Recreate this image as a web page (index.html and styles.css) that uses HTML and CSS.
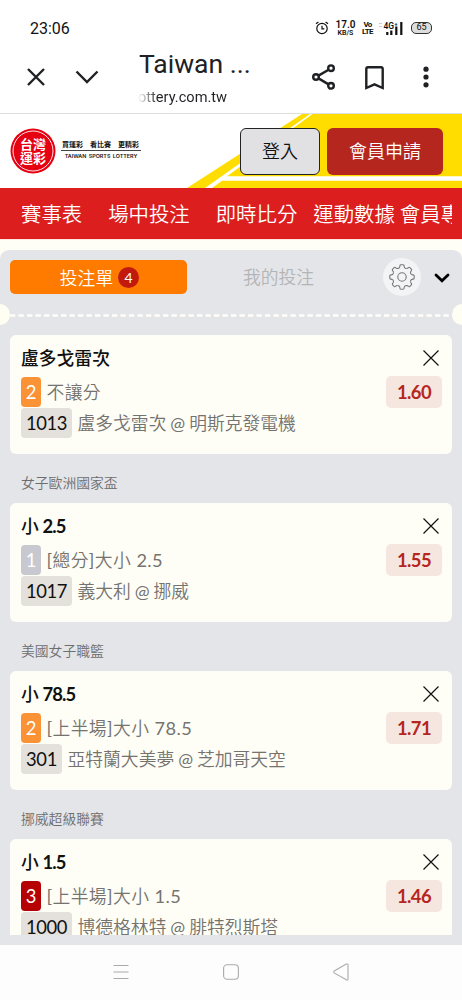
FILE: index.html
```html
<!DOCTYPE html>
<html lang="zh-Hant">
<head>
<meta charset="utf-8">
<title>Taiwan Sports Lottery</title>
<link rel="stylesheet" href="styles.css">
</head>
<body>
<div class="status">
  <span class="clock">23:06</span>
  <div class="indicators">
    <svg class="alarm" width="14" height="14" viewBox="0 0 14 14"><circle cx="7" cy="7.5" r="5.2"/><path d="M7 4.8V7.8H9.3M1 2.8L3.4 1M13 2.8L10.6 1"/></svg>
    <span class="speed"><b>17.0</b><i>KB/S</i></span>
    <span class="volte"><b>Vo</b><b>LTE</b></span>
    <svg class="signal" width="24" height="15" viewBox="0 0 24 15"><path class="faint" d="M0 2.5h3M0 5.5h3"/><text x="4.5" y="7.5">4G⁺</text><path class="bars" d="M8.3 14v-3M12.3 14V9.5M17.3 14V5.5M22.3 14V1"/></svg>
    <span class="battery">65</span>
  </div>
</div>
<div class="browser">
  <svg class="b-close" width="20" height="20" viewBox="0 0 20 20"><path d="M2 2L18 18M18 2L2 18"/></svg>
  <svg class="b-down" width="24" height="14" viewBox="0 0 24 14"><path d="M1.5 1.5L12 12L22.5 1.5"/></svg>
  <div class="page-title"><div class="t">Taiwan ...</div><div class="url">ottery.com.tw</div></div>
  <svg class="b-share" width="24" height="26" viewBox="0 0 24 26"><path d="M6.5 11.6L16.6 5.7M6.5 14.4L16.6 20.4"/><circle cx="4" cy="13" r="2.8"/><circle cx="19" cy="4.2" r="2.8"/><circle cx="19" cy="21.8" r="2.8"/></svg>
  <svg class="b-mark" width="19" height="24" viewBox="0 0 19 24"><path d="M1.3 22V3Q1.3 1.3 3 1.3H16Q17.7 1.3 17.7 3V22L9.5 18.4Z"/></svg>
  <svg class="b-more" width="6" height="22" viewBox="0 0 6 22"><circle cx="3" cy="3.2" r="2.6"/><circle cx="3" cy="11" r="2.6"/><circle cx="3" cy="18.8" r="2.6"/></svg>
</div>
<header class="site">
  <svg class="stripes" width="275" height="74" viewBox="0 0 275 74"><path fill="#fd0" d="M0 74L115 0H275V74Z"/><path fill="#fff" d="M18 74L123 0H125.5L40 62.3H275V66.7H35L25 74Z"/></svg>
  <svg class="seal" width="46" height="46" viewBox="0 0 46 46"><circle cx="23" cy="23" r="22.5" fill="#e50012"/><circle cx="23" cy="23" r="20" fill="none" stroke="#fff" stroke-width=".9"/><text><tspan x="10" y="21.3">台灣</tspan><tspan x="10" y="34.6">運彩</tspan></text></svg>
  <div class="slogan"><div class="zh"><span>買運彩</span><span>看比賽</span><span>更精彩</span></div><div class="en">TAIWAN SPORTS LOTTERY</div></div>
  <button class="btn login">登入</button>
  <button class="btn join">會員申請</button>
</header>
<nav class="menu"><div class="items"><span>賽事表</span><span>場中投注</span><span>即時比分</span><span>運動數據</span><span>會員專區</span></div></nav>
<div class="sheet">
<main class="slip">
  <div class="tabs">
    <div class="tab on">投注單<span class="count">4</span></div>
    <div class="tab mine">我的投注</div>
    <div class="gear"><svg width="28" height="28" viewBox="-14 -14 28 28"><defs><path id="tooth" d="M9.2-2.8Q10.2-2 11.2-2.1Q12.2-2 12.2-1V1Q12.2 2 11.2 2.1Q10.2 2 9.2 2.8Q8.4 3.6 8.5 4.5"/></defs><use href="#tooth"/><use href="#tooth" transform="rotate(45)"/><use href="#tooth" transform="rotate(90)"/><use href="#tooth" transform="rotate(135)"/><use href="#tooth" transform="rotate(180)"/><use href="#tooth" transform="rotate(225)"/><use href="#tooth" transform="rotate(270)"/><use href="#tooth" transform="rotate(315)"/><circle r="4.2"/></svg></div>
    <svg class="fold" width="16" height="10" viewBox="0 0 16 10"><path d="M2 2L8 7.8L14 2"/></svg>
  </div>
  <div class="tear"><svg width="462" height="3" viewBox="0 0 462 3"><path d="M10 1.5H454"/></svg></div>
  <div class="bets">
    <section class="card">
      <div class="line head"><b>盧多戈雷次</b><svg class="x" width="16" height="16" viewBox="0 0 16 16"><path d="M.5.5L15.5 15.5M15.5.5L.5 15.5"/></svg></div>
      <div class="line"><span class="pick orange">2</span><span class="txt kind">不讓分</span><span class="odds">1.60</span></div>
      <div class="line"><span class="num">1013</span><span class="txt game">盧多戈雷次 <i>@</i> 明斯克發電機</span></div>
    </section>
    <h3>女子歐洲國家盃</h3>
    <section class="card">
      <div class="line head"><b>小 <i>2.5</i></b><svg class="x" width="16" height="16" viewBox="0 0 16 16"><path d="M.5.5L15.5 15.5M15.5.5L.5 15.5"/></svg></div>
      <div class="line"><span class="pick grey">1</span><span class="txt kind"><i>[</i>總分<i>]</i>大小 <i>2.5</i></span><span class="odds">1.55</span></div>
      <div class="line"><span class="num">1017</span><span class="txt game">義大利 <i>@</i> 挪威</span></div>
    </section>
    <h3>美國女子職籃</h3>
    <section class="card">
      <div class="line head"><b>小 <i>78.5</i></b><svg class="x" width="16" height="16" viewBox="0 0 16 16"><path d="M.5.5L15.5 15.5M15.5.5L.5 15.5"/></svg></div>
      <div class="line"><span class="pick orange">2</span><span class="txt kind"><i>[</i>上半場<i>]</i>大小 <i>78.5</i></span><span class="odds">1.71</span></div>
      <div class="line"><span class="num">301</span><span class="txt game">亞特蘭大美夢 <i>@</i> 芝加哥天空</span></div>
    </section>
    <h3>挪威超級聯賽</h3>
    <section class="card">
      <div class="line head"><b>小 <i>1.5</i></b><svg class="x" width="16" height="16" viewBox="0 0 16 16"><path d="M.5.5L15.5 15.5M15.5.5L.5 15.5"/></svg></div>
      <div class="line"><span class="pick red">3</span><span class="txt kind"><i>[</i>上半場<i>]</i>大小 <i>1.5</i></span><span class="odds">1.46</span></div>
      <div class="line"><span class="num">1000</span><span class="txt game">博德格林特 <i>@</i> 腓特烈斯塔</span></div>
    </section>
  </div>
</main>
</div>
<footer class="sysnav">
  <svg width="16" height="16" viewBox="0 0 16 16"><path d="M.5 1.5H15.5M.5 8H15.5M.5 14.5H15.5"/></svg>
  <svg width="16" height="16" viewBox="0 0 16 16"><rect x=".6" y=".8" width="14.8" height="14.4" rx="3.5"/></svg>
  <svg width="16" height="18" viewBox="0 0 16 18"><path d="M1.2 8.1L13.3 1.1Q15 .5 15 2V16Q15 17.5 13.3 16.8L1.2 9.9Q.2 9 1.2 8.1Z"/></svg>
</footer>
</body>
</html>
```
FILE: styles.css
```css
* { box-sizing: border-box; }
body { margin: 0; width: 462px; height: 1000px; overflow: hidden; background: #fff; color: #111; font-family: Lato, "Noto Sans CJK TC", sans-serif; display: flex; flex-direction: column; }
svg { display: block; flex: none; fill: none; }
.status { height: 48px; padding: 8px 30px 0 30px; display: flex; justify-content: space-between; align-items: center; font-family: Roboto, sans-serif; }
.clock { font-size: 16px; }
.indicators { display: flex; align-items: center; }
.alarm { stroke: #111; stroke-width: 1.2; margin-right: 6px; }
.speed { width: 21px; display: flex; flex-direction: column; align-items: center; margin-right: 6px; }
.speed b { font-size: 10px; line-height: 9px; font-weight: 600; }
.speed i { font-style: normal; font-weight: 600; font-size: 7px; line-height: 8px; }
.volte { width: 11px; display: flex; flex-direction: column; align-items: center; font-size: 8px; line-height: 7.5px; letter-spacing: -.7px; margin-right: 6px; }
.signal { margin-right: 8px; }
.signal text { font: 600 8.5px Roboto, sans-serif; fill: #111; }
.signal .bars { stroke: #111; stroke-width: 2.2; }
.signal .faint { stroke: #ccc; }
.battery { width: 21px; height: 12px; border: 1.5px solid #333; border-radius: 5px; background: #ddd; font-size: 9px; line-height: 9.5px; text-align: center; }
.browser { height: 66px; flex: none; border-bottom: 1px solid #dcdee0; display: flex; align-items: center; padding: 0 30px 7px 26px; font-family: Roboto, sans-serif; }
.browser svg { stroke: #202124; stroke-width: 2.4; }
.b-down { margin-left: 29px; }
.page-title { width: 173px; margin-left: 40px; padding-top: 5px; }
.t { font-size: 26.5px; line-height: 34px; color: #202124; white-space: nowrap; }
.url { font-size: 14.6px; line-height: 32px; height: 31px; color: #202124; margin-left: -1px; background: linear-gradient(90deg, #fff 0, #202124 20px); -webkit-background-clip: text; background-clip: text; color: transparent; }
.b-mark { margin-left: 29px; margin-top: 2px; }
.b-more { margin-left: 39px; }
.browser .b-more { fill: #202124; stroke: none; }
.site { height: 74px; flex: none; position: relative; display: flex; align-items: center; padding: 0 19px 0 10px; }
.site > * { position: relative; }
.site .stripes { position: absolute; right: 0; top: 0; }
.seal text { font: 700 13px "Noto Sans CJK TC", sans-serif; fill: #fff; }
.slogan { width: 80px; margin-left: 5px; height: 27px; }
.zh { display: flex; justify-content: space-between; padding: 0 2px 0 1px; font-size: 7px; font-weight: 700; line-height: 12px; border-bottom: 1px solid #444; }
.en { font: 600 5.4px/10px Inter, sans-serif; white-space: nowrap; text-align: center; letter-spacing: 0; word-spacing: 1px; }
.btn { height: 47px; border-radius: 6px; font: 350 18px Lato, "Noto Sans CJK TC", sans-serif; padding: 0 0 2px; }
.login { width: 80px; margin-left: 99px; background: #e1e1e3; color: #111; border: 1.5px solid #222; }
.join { width: 116px; margin-left: 7px; background: #b5261e; color: #fff; border: 0; }
.menu { height: 52px; flex: none; background: #dc1e1f; border-bottom: 1px solid #ffe3dc; padding: 0 10px 0 21px; color: #fff; font-size: 20.4px; font-weight: 350; line-height: 53px; }
.items { display: flex; white-space: nowrap; overflow: hidden; height: 51px; }
.items span { flex: none; }
.items span:nth-child(2) { margin-left: 26px; }
.items span:nth-child(3) { margin-left: 26px; }
.items span:nth-child(4) { margin-left: 16px; }
.items span:nth-child(5) { margin-left: 5px; }
.sheet { height: 705px; flex: none; background: #fffef6; padding-top: 10px; }
.slip { height: 695px; background: #e4e5e8; border-radius: 9px 9px 0 0; display: flex; flex-direction: column; padding: 0 10px 10px; }
.tabs { height: 54px; display: flex; align-items: center; flex: none; }
.tab { width: 177px; height: 34px; border-radius: 5px; display: flex; justify-content: center; align-items: center; font-size: 17.8px; font-weight: 350; color: #b4b4b6; padding-bottom: 1px; }
.tab.on { background: #ff7b00; color: #fff; padding-left: 2px; }
.mine { padding-left: 6px; padding-bottom: 2px; }
.count { width: 21px; height: 21px; border-radius: 50%; background: #c2190d; font-size: 14px; font-weight: 400; line-height: 21px; text-align: center; margin: 2px 0 0 5px; }
.gear { width: 38px; height: 38px; margin-left: 19px; border-radius: 50%; background: #f3f4f6; display: grid; place-items: center; stroke: #777; stroke-width: 1.1; }
.fold { margin-left: 13px; margin-top: 2px; stroke: #000; stroke-width: 2.8; stroke-linecap: round; }
.tear { height: 21px; margin: 0 -10px; display: flex; align-items: center; flex: none; position: relative; }
.tear svg { stroke: #fffef8; stroke-width: 2.6; stroke-dasharray: 5.3 3.2; position: relative; top: 1px; }
.tear::before, .tear::after { content: ""; position: absolute; top: 0; width: 20px; height: 21px; border-radius: 50%; background: #fffef3; }
.tear::before { left: -10px; }
.tear::after { right: -10px; }
.bets { flex: 1; overflow: hidden; padding-top: 10px; }
.card { height: 119px; background: #fffef6; border-radius: 6px; padding: 5px 10px 0 11px; }
.line { height: 31.5px; display: flex; align-items: center; font-size: 17.8px; }
.head { height: 36px; justify-content: space-between; }
.head b { font-weight: 500; color: #111; padding-bottom: 2px; word-spacing: -.8px; }
.head i { font-style: normal; font-weight: 700; font-size: 18.4px; line-height: 1; letter-spacing: -.9px; }
.x { stroke: #111; stroke-width: 1.2; margin-right: 3px; }
.pick { width: 20px; height: 30px; line-height: 30px; border-radius: 4px; text-align: center; color: #fff; font-size: 18.4px; flex: none; }
.orange { background: #fb9235; }
.grey { background: #c8c8d0; }
.red { background: #b50004; }
.txt { color: #74736f; font-weight: 350; white-space: pre; padding-bottom: 2px; }
.txt i { font-style: normal; font-weight: 400; }
.kind { margin-left: 5.5px; letter-spacing: .4px; }
.kind i { font-size: 18.2px; line-height: 1; }
.game { margin-left: 5.5px; word-spacing: -.9px; }
.num { width: 51px; height: 30px; line-height: 30px; text-align: center; border-radius: 4px; background: #e4e0dc; color: #111; font-size: 18.4px; letter-spacing: -.4px; flex: none; }
.card:nth-of-type(3) .num { width: 41px; }
.odds { margin-left: auto; width: 56px; height: 32px; line-height: 32px; border-radius: 5px; background: #f5e6e0; color: #b5261e; font-weight: 700; font-size: 18.4px; letter-spacing: -.6px; text-align: center; }
h3 { margin: 0; height: 49px; line-height: 57px; padding-left: 11px; font-size: 13.8px; font-weight: 350; color: #6d6e70; }
.sysnav { height: 55px; flex: none; background: #fdfdfe; display: flex; align-items: center; justify-content: center; gap: 94px; padding-bottom: 1px; }
.sysnav svg { stroke: #aaa; stroke-width: 1.1; }
```
